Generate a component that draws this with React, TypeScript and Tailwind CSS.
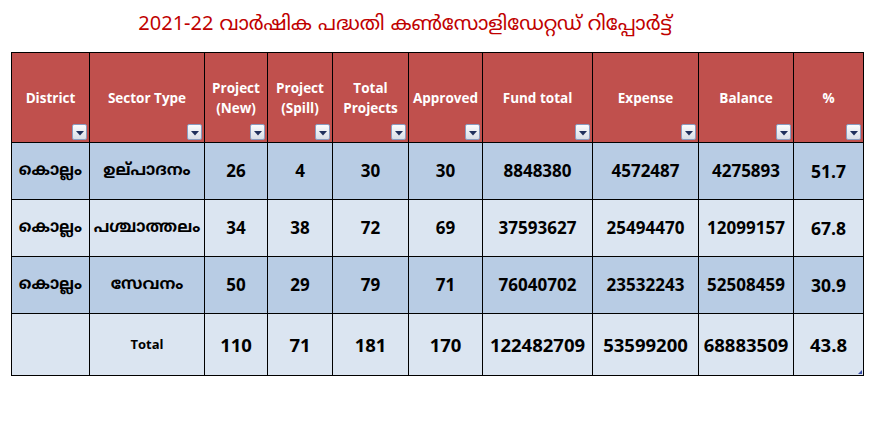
import React from 'react'

type Row = {
  district: string
  sector: string
  pNew: number
  pSpill: number
  total: number
  approved: number
  fund: number
  expense: number
  balance: number
  percent: string
}

const rows: Row[] = [
  { district: 'കൊല്ലം', sector: 'ഉല്\u200Cപാദനം', pNew: 26, pSpill: 4, total: 30, approved: 30, fund: 8848380, expense: 4572487, balance: 4275893, percent: '51.7' },
  { district: 'കൊല്ലം', sector: 'പശ്ചാത്തലം', pNew: 34, pSpill: 38, total: 72, approved: 69, fund: 37593627, expense: 25494470, balance: 12099157, percent: '67.8' },
  { district: 'കൊല്ലം', sector: 'സേവനം', pNew: 50, pSpill: 29, total: 79, approved: 71, fund: 76040702, expense: 23532243, balance: 52508459, percent: '30.9' }
]

const headers = [
  ['District'],
  ['Sector Type'],
  ['Project', '(New)'],
  ['Project', '(Spill)'],
  ['Total', 'Projects'],
  ['Approved'],
  ['Fund total'],
  ['Expense'],
  ['Balance'],
  ['%']
]

const widths = [78, 115, 63, 65, 76, 74, 110, 106, 95, 70]

function FilterButton() {
  return (
    <span className="absolute right-[2px] bottom-[2px] flex h-[16px] w-[15px] items-center justify-center rounded-[2px] border border-[#8a9cc0] bg-gradient-to-b from-[#fbfcfd] to-[#d9dee7]">
      <svg width="8" height="5" viewBox="0 0 8 5" className="mt-[2px]">
        <path d="M0 0 H8 L4 4.5 Z" fill="#1f2f5c" />
      </svg>
    </span>
  )
}

const cell = 'border border-black text-center align-middle font-bold text-black'
const mal = "[font-family:'Noto_Sans_Malayalam','Noto_Sans',sans-serif]"

export default function App() {
  return (
    <div className="h-[426px] w-[891px] bg-white [font-family:'Open_Sans',sans-serif]">
      <div className="flex h-[52px] w-[810px] items-center justify-center">
        <h1 className={`text-[20px] leading-none text-[#c00000] ${mal}`}>
          2021-22 വാർഷിക പദ്ധതി കൺസോളിഡേറ്റഡ് റിപ്പോർട്ട്
        </h1>
      </div>

      <div className="pl-[11px]">
        <table className="w-[852px] table-fixed border-collapse">
          <colgroup>
            {widths.map((w, i) => (
              <col key={i} style={{ width: w }} />
            ))}
          </colgroup>
          <thead>
            <tr className="h-[90px] bg-[#c0504d]">
              {headers.map((lines, i) => (
                <th
                  key={i}
                  className="relative border border-black text-center align-middle text-[13.5px] font-bold leading-[20px] text-white"
                >
                  {lines.map((l) => (
                    <div key={l}>{l}</div>
                  ))}
                  <FilterButton />
                </th>
              ))}
            </tr>
          </thead>
          <tbody>
            {rows.map((r, i) => (
              <tr key={i} className={`h-[57px] ${i % 2 === 0 ? 'bg-[#b8cce4]' : 'bg-[#dbe5f1]'}`}>
                <td className={`${cell} ${mal} text-[16px]`}>{r.district}</td>
                <td className={`${cell} ${mal} text-[16px]`}>{r.sector}</td>
                <td className={`${cell} text-[17px]`}>{r.pNew}</td>
                <td className={`${cell} text-[17px]`}>{r.pSpill}</td>
                <td className={`${cell} text-[17px]`}>{r.total}</td>
                <td className={`${cell} text-[17px]`}>{r.approved}</td>
                <td className={`${cell} text-[17px]`}>{r.fund}</td>
                <td className={`${cell} text-[17px]`}>{r.expense}</td>
                <td className={`${cell} text-[17px]`}>{r.balance}</td>
                <td className={`${cell} text-[17.5px]`}>{r.percent}</td>
              </tr>
            ))}
            <tr className="h-[62px] bg-[#dbe5f1]">
              <td className={cell}></td>
              <td className={`${cell} text-[13px]`}>Total</td>
              <td className={`${cell} text-[18.5px]`}>110</td>
              <td className={`${cell} text-[18.5px]`}>71</td>
              <td className={`${cell} text-[18.5px]`}>181</td>
              <td className={`${cell} text-[18.5px]`}>170</td>
              <td className={`${cell} text-[18.5px]`}>122482709</td>
              <td className={`${cell} text-[18.5px]`}>53599200</td>
              <td className={`${cell} text-[18.5px]`}>68883509</td>
              <td className={`relative ${cell} text-[18.5px]`}>
                43.8
                <span className="absolute right-[1px] bottom-[1px] h-0 w-0 border-b-[4px] border-l-[4px] border-b-[#3a4fa8] border-l-transparent" />
              </td>
            </tr>
          </tbody>
        </table>
      </div>
    </div>
  )
}
